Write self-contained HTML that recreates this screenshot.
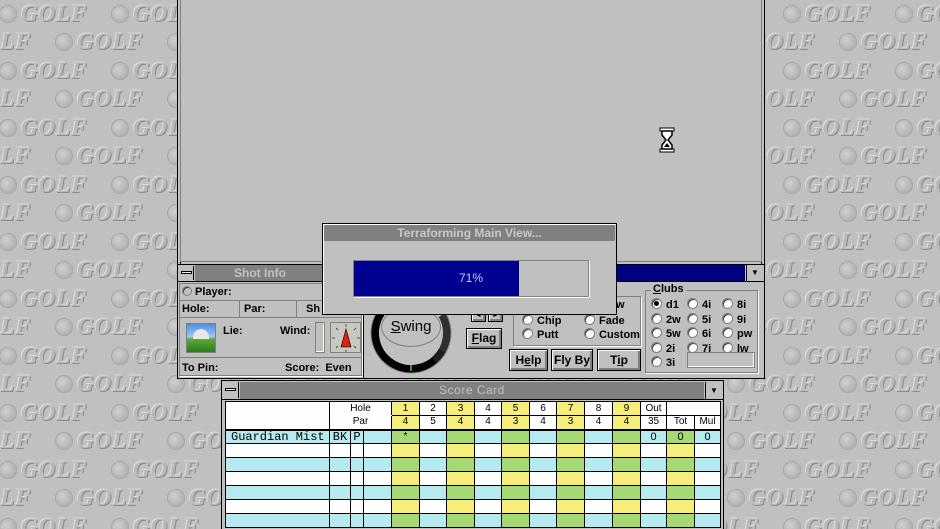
<!DOCTYPE html>
<html><head><style>
*{margin:0;padding:0;box-sizing:border-box}
html{width:940px;height:529px;overflow:hidden}
body{width:940px;height:529px;overflow:hidden;background:#c0c0c0;position:relative;font-family:"Liberation Sans",sans-serif;font-weight:bold;font-size:11px;color:#000}
.bg{position:absolute;left:0;top:0;width:940px;height:529px;overflow:hidden}
.row{position:absolute;white-space:nowrap;height:28px;line-height:28px}
.it{display:inline-block;width:112px;position:relative;height:28px}
.ball{position:absolute;left:6px;top:5px;width:18px;height:18px;border-radius:50%;background:radial-gradient(circle at 40% 40%,#d0d0d0,#b0b0b0 70%,#989898);box-shadow:inset 0 0 0 1px #a8a8a8}
.gt{position:absolute;left:28px;top:0;font-family:"Liberation Serif",serif;font-style:italic;font-weight:bold;font-size:23px;color:#bababa;text-shadow:-1px -1px 0 #dcdcdc,1px 1px 0 #8c8c8c;letter-spacing:1px}
.a{position:absolute}
.t{position:absolute;font-size:11px}
.btn{position:absolute;background:#c0c0c0;border:1px solid #000;box-shadow:inset 1px 1px 0 #fff,inset -2px -2px 0 #808080;text-align:center;font-size:12px;line-height:18px}
.rad{display:inline-block;width:11px;height:11px;border-radius:50%;background:#fff;border:1px solid #808080;box-shadow:inset 1px 1px 0 #404040;vertical-align:-1px;margin-right:4px;position:relative}
.rad.on::after{content:"";position:absolute;left:2px;top:2px;width:5px;height:5px;border-radius:50%;background:#000}
table{border-collapse:collapse;table-layout:fixed;position:absolute;left:225px;top:401px}
td{border:1px solid #000;height:14px;font-size:10px;font-weight:normal;text-align:center;padding:0;line-height:12px;overflow:hidden}
.y{background:#f6ee7a}.g{background:#a6d874}.c{background:#b4eaf0}.w{background:#fff}
</style></head><body>
<div class="bg">
<div class="row" style="top:0;left:-7px"><span class="it"><i class="ball"></i><b class="gt">GOLF</b></span><span class="it"><i class="ball"></i><b class="gt">GOLF</b></span><span class="it"><i class="ball"></i><b class="gt">GOLF</b></span><span class="it"><i class="ball"></i><b class="gt">GOLF</b></span><span class="it"><i class="ball"></i><b class="gt">GOLF</b></span><span class="it"><i class="ball"></i><b class="gt">GOLF</b></span><span class="it"><i class="ball"></i><b class="gt">GOLF</b></span><span class="it"><i class="ball"></i><b class="gt">GOLF</b></span><span class="it"><i class="ball"></i><b class="gt">GOLF</b></span></div>
<div class="row" style="top:28px;left:-63px"><span class="it"><i class="ball"></i><b class="gt">GOLF</b></span><span class="it"><i class="ball"></i><b class="gt">GOLF</b></span><span class="it"><i class="ball"></i><b class="gt">GOLF</b></span><span class="it"><i class="ball"></i><b class="gt">GOLF</b></span><span class="it"><i class="ball"></i><b class="gt">GOLF</b></span><span class="it"><i class="ball"></i><b class="gt">GOLF</b></span><span class="it"><i class="ball"></i><b class="gt">GOLF</b></span><span class="it"><i class="ball"></i><b class="gt">GOLF</b></span><span class="it"><i class="ball"></i><b class="gt">GOLF</b></span><span class="it"><i class="ball"></i><b class="gt">GOLF</b></span></div>
<div class="row" style="top:57px;left:-7px"><span class="it"><i class="ball"></i><b class="gt">GOLF</b></span><span class="it"><i class="ball"></i><b class="gt">GOLF</b></span><span class="it"><i class="ball"></i><b class="gt">GOLF</b></span><span class="it"><i class="ball"></i><b class="gt">GOLF</b></span><span class="it"><i class="ball"></i><b class="gt">GOLF</b></span><span class="it"><i class="ball"></i><b class="gt">GOLF</b></span><span class="it"><i class="ball"></i><b class="gt">GOLF</b></span><span class="it"><i class="ball"></i><b class="gt">GOLF</b></span><span class="it"><i class="ball"></i><b class="gt">GOLF</b></span></div>
<div class="row" style="top:85px;left:-63px"><span class="it"><i class="ball"></i><b class="gt">GOLF</b></span><span class="it"><i class="ball"></i><b class="gt">GOLF</b></span><span class="it"><i class="ball"></i><b class="gt">GOLF</b></span><span class="it"><i class="ball"></i><b class="gt">GOLF</b></span><span class="it"><i class="ball"></i><b class="gt">GOLF</b></span><span class="it"><i class="ball"></i><b class="gt">GOLF</b></span><span class="it"><i class="ball"></i><b class="gt">GOLF</b></span><span class="it"><i class="ball"></i><b class="gt">GOLF</b></span><span class="it"><i class="ball"></i><b class="gt">GOLF</b></span><span class="it"><i class="ball"></i><b class="gt">GOLF</b></span></div>
<div class="row" style="top:114px;left:-7px"><span class="it"><i class="ball"></i><b class="gt">GOLF</b></span><span class="it"><i class="ball"></i><b class="gt">GOLF</b></span><span class="it"><i class="ball"></i><b class="gt">GOLF</b></span><span class="it"><i class="ball"></i><b class="gt">GOLF</b></span><span class="it"><i class="ball"></i><b class="gt">GOLF</b></span><span class="it"><i class="ball"></i><b class="gt">GOLF</b></span><span class="it"><i class="ball"></i><b class="gt">GOLF</b></span><span class="it"><i class="ball"></i><b class="gt">GOLF</b></span><span class="it"><i class="ball"></i><b class="gt">GOLF</b></span></div>
<div class="row" style="top:142px;left:-63px"><span class="it"><i class="ball"></i><b class="gt">GOLF</b></span><span class="it"><i class="ball"></i><b class="gt">GOLF</b></span><span class="it"><i class="ball"></i><b class="gt">GOLF</b></span><span class="it"><i class="ball"></i><b class="gt">GOLF</b></span><span class="it"><i class="ball"></i><b class="gt">GOLF</b></span><span class="it"><i class="ball"></i><b class="gt">GOLF</b></span><span class="it"><i class="ball"></i><b class="gt">GOLF</b></span><span class="it"><i class="ball"></i><b class="gt">GOLF</b></span><span class="it"><i class="ball"></i><b class="gt">GOLF</b></span><span class="it"><i class="ball"></i><b class="gt">GOLF</b></span></div>
<div class="row" style="top:171px;left:-7px"><span class="it"><i class="ball"></i><b class="gt">GOLF</b></span><span class="it"><i class="ball"></i><b class="gt">GOLF</b></span><span class="it"><i class="ball"></i><b class="gt">GOLF</b></span><span class="it"><i class="ball"></i><b class="gt">GOLF</b></span><span class="it"><i class="ball"></i><b class="gt">GOLF</b></span><span class="it"><i class="ball"></i><b class="gt">GOLF</b></span><span class="it"><i class="ball"></i><b class="gt">GOLF</b></span><span class="it"><i class="ball"></i><b class="gt">GOLF</b></span><span class="it"><i class="ball"></i><b class="gt">GOLF</b></span></div>
<div class="row" style="top:199px;left:-63px"><span class="it"><i class="ball"></i><b class="gt">GOLF</b></span><span class="it"><i class="ball"></i><b class="gt">GOLF</b></span><span class="it"><i class="ball"></i><b class="gt">GOLF</b></span><span class="it"><i class="ball"></i><b class="gt">GOLF</b></span><span class="it"><i class="ball"></i><b class="gt">GOLF</b></span><span class="it"><i class="ball"></i><b class="gt">GOLF</b></span><span class="it"><i class="ball"></i><b class="gt">GOLF</b></span><span class="it"><i class="ball"></i><b class="gt">GOLF</b></span><span class="it"><i class="ball"></i><b class="gt">GOLF</b></span><span class="it"><i class="ball"></i><b class="gt">GOLF</b></span></div>
<div class="row" style="top:228px;left:-7px"><span class="it"><i class="ball"></i><b class="gt">GOLF</b></span><span class="it"><i class="ball"></i><b class="gt">GOLF</b></span><span class="it"><i class="ball"></i><b class="gt">GOLF</b></span><span class="it"><i class="ball"></i><b class="gt">GOLF</b></span><span class="it"><i class="ball"></i><b class="gt">GOLF</b></span><span class="it"><i class="ball"></i><b class="gt">GOLF</b></span><span class="it"><i class="ball"></i><b class="gt">GOLF</b></span><span class="it"><i class="ball"></i><b class="gt">GOLF</b></span><span class="it"><i class="ball"></i><b class="gt">GOLF</b></span></div>
<div class="row" style="top:256px;left:-63px"><span class="it"><i class="ball"></i><b class="gt">GOLF</b></span><span class="it"><i class="ball"></i><b class="gt">GOLF</b></span><span class="it"><i class="ball"></i><b class="gt">GOLF</b></span><span class="it"><i class="ball"></i><b class="gt">GOLF</b></span><span class="it"><i class="ball"></i><b class="gt">GOLF</b></span><span class="it"><i class="ball"></i><b class="gt">GOLF</b></span><span class="it"><i class="ball"></i><b class="gt">GOLF</b></span><span class="it"><i class="ball"></i><b class="gt">GOLF</b></span><span class="it"><i class="ball"></i><b class="gt">GOLF</b></span><span class="it"><i class="ball"></i><b class="gt">GOLF</b></span></div>
<div class="row" style="top:285px;left:-7px"><span class="it"><i class="ball"></i><b class="gt">GOLF</b></span><span class="it"><i class="ball"></i><b class="gt">GOLF</b></span><span class="it"><i class="ball"></i><b class="gt">GOLF</b></span><span class="it"><i class="ball"></i><b class="gt">GOLF</b></span><span class="it"><i class="ball"></i><b class="gt">GOLF</b></span><span class="it"><i class="ball"></i><b class="gt">GOLF</b></span><span class="it"><i class="ball"></i><b class="gt">GOLF</b></span><span class="it"><i class="ball"></i><b class="gt">GOLF</b></span><span class="it"><i class="ball"></i><b class="gt">GOLF</b></span></div>
<div class="row" style="top:313px;left:-63px"><span class="it"><i class="ball"></i><b class="gt">GOLF</b></span><span class="it"><i class="ball"></i><b class="gt">GOLF</b></span><span class="it"><i class="ball"></i><b class="gt">GOLF</b></span><span class="it"><i class="ball"></i><b class="gt">GOLF</b></span><span class="it"><i class="ball"></i><b class="gt">GOLF</b></span><span class="it"><i class="ball"></i><b class="gt">GOLF</b></span><span class="it"><i class="ball"></i><b class="gt">GOLF</b></span><span class="it"><i class="ball"></i><b class="gt">GOLF</b></span><span class="it"><i class="ball"></i><b class="gt">GOLF</b></span><span class="it"><i class="ball"></i><b class="gt">GOLF</b></span></div>
<div class="row" style="top:342px;left:-7px"><span class="it"><i class="ball"></i><b class="gt">GOLF</b></span><span class="it"><i class="ball"></i><b class="gt">GOLF</b></span><span class="it"><i class="ball"></i><b class="gt">GOLF</b></span><span class="it"><i class="ball"></i><b class="gt">GOLF</b></span><span class="it"><i class="ball"></i><b class="gt">GOLF</b></span><span class="it"><i class="ball"></i><b class="gt">GOLF</b></span><span class="it"><i class="ball"></i><b class="gt">GOLF</b></span><span class="it"><i class="ball"></i><b class="gt">GOLF</b></span><span class="it"><i class="ball"></i><b class="gt">GOLF</b></span></div>
<div class="row" style="top:370px;left:-63px"><span class="it"><i class="ball"></i><b class="gt">GOLF</b></span><span class="it"><i class="ball"></i><b class="gt">GOLF</b></span><span class="it"><i class="ball"></i><b class="gt">GOLF</b></span><span class="it"><i class="ball"></i><b class="gt">GOLF</b></span><span class="it"><i class="ball"></i><b class="gt">GOLF</b></span><span class="it"><i class="ball"></i><b class="gt">GOLF</b></span><span class="it"><i class="ball"></i><b class="gt">GOLF</b></span><span class="it"><i class="ball"></i><b class="gt">GOLF</b></span><span class="it"><i class="ball"></i><b class="gt">GOLF</b></span><span class="it"><i class="ball"></i><b class="gt">GOLF</b></span></div>
<div class="row" style="top:399px;left:-7px"><span class="it"><i class="ball"></i><b class="gt">GOLF</b></span><span class="it"><i class="ball"></i><b class="gt">GOLF</b></span><span class="it"><i class="ball"></i><b class="gt">GOLF</b></span><span class="it"><i class="ball"></i><b class="gt">GOLF</b></span><span class="it"><i class="ball"></i><b class="gt">GOLF</b></span><span class="it"><i class="ball"></i><b class="gt">GOLF</b></span><span class="it"><i class="ball"></i><b class="gt">GOLF</b></span><span class="it"><i class="ball"></i><b class="gt">GOLF</b></span><span class="it"><i class="ball"></i><b class="gt">GOLF</b></span></div>
<div class="row" style="top:427px;left:-63px"><span class="it"><i class="ball"></i><b class="gt">GOLF</b></span><span class="it"><i class="ball"></i><b class="gt">GOLF</b></span><span class="it"><i class="ball"></i><b class="gt">GOLF</b></span><span class="it"><i class="ball"></i><b class="gt">GOLF</b></span><span class="it"><i class="ball"></i><b class="gt">GOLF</b></span><span class="it"><i class="ball"></i><b class="gt">GOLF</b></span><span class="it"><i class="ball"></i><b class="gt">GOLF</b></span><span class="it"><i class="ball"></i><b class="gt">GOLF</b></span><span class="it"><i class="ball"></i><b class="gt">GOLF</b></span><span class="it"><i class="ball"></i><b class="gt">GOLF</b></span></div>
<div class="row" style="top:456px;left:-7px"><span class="it"><i class="ball"></i><b class="gt">GOLF</b></span><span class="it"><i class="ball"></i><b class="gt">GOLF</b></span><span class="it"><i class="ball"></i><b class="gt">GOLF</b></span><span class="it"><i class="ball"></i><b class="gt">GOLF</b></span><span class="it"><i class="ball"></i><b class="gt">GOLF</b></span><span class="it"><i class="ball"></i><b class="gt">GOLF</b></span><span class="it"><i class="ball"></i><b class="gt">GOLF</b></span><span class="it"><i class="ball"></i><b class="gt">GOLF</b></span><span class="it"><i class="ball"></i><b class="gt">GOLF</b></span></div>
<div class="row" style="top:484px;left:-63px"><span class="it"><i class="ball"></i><b class="gt">GOLF</b></span><span class="it"><i class="ball"></i><b class="gt">GOLF</b></span><span class="it"><i class="ball"></i><b class="gt">GOLF</b></span><span class="it"><i class="ball"></i><b class="gt">GOLF</b></span><span class="it"><i class="ball"></i><b class="gt">GOLF</b></span><span class="it"><i class="ball"></i><b class="gt">GOLF</b></span><span class="it"><i class="ball"></i><b class="gt">GOLF</b></span><span class="it"><i class="ball"></i><b class="gt">GOLF</b></span><span class="it"><i class="ball"></i><b class="gt">GOLF</b></span><span class="it"><i class="ball"></i><b class="gt">GOLF</b></span></div>
<div class="row" style="top:513px;left:-7px"><span class="it"><i class="ball"></i><b class="gt">GOLF</b></span><span class="it"><i class="ball"></i><b class="gt">GOLF</b></span><span class="it"><i class="ball"></i><b class="gt">GOLF</b></span><span class="it"><i class="ball"></i><b class="gt">GOLF</b></span><span class="it"><i class="ball"></i><b class="gt">GOLF</b></span><span class="it"><i class="ball"></i><b class="gt">GOLF</b></span><span class="it"><i class="ball"></i><b class="gt">GOLF</b></span><span class="it"><i class="ball"></i><b class="gt">GOLF</b></span><span class="it"><i class="ball"></i><b class="gt">GOLF</b></span></div>
</div>

<!-- main window -->
<div class="a" style="left:177px;top:-2px;width:588px;height:268px;background:#c0c0c0;border:1px solid #000;box-shadow:inset 2px 0 0 #c0c0c0,inset 3px 0 0 #000,inset -2px 0 0 #c0c0c0,inset -3px 0 0 #000"></div>
<div class="a" style="left:180px;top:-1px;width:582px;height:263px;border:1px solid #808080;border-top:none"></div>
<svg class="a" style="left:659px;top:127px" width="16" height="26" viewBox="0 0 16 26"><rect x="1" y="1" width="14" height="3" fill="#fff" stroke="#000"/><rect x="1" y="22" width="14" height="3" fill="#fff" stroke="#000"/><path d="M3 4 L3 8 L7 13 L3 18 L3 22 L13 22 L13 18 L9 13 L13 8 L13 4 Z" fill="#fff" stroke="#000" stroke-width="1.5"/><path d="M5 20 L8 16 L11 20Z" fill="#000"/></svg>

<!-- shot info titlebar -->
<div class="a" style="left:177px;top:264px;width:588px;height:18px;background:#c0c0c0;border:1px solid #000"></div>
<div class="a" style="left:179px;top:266px;width:15px;height:14px;background:#c0c0c0;border-right:1px solid #000"><div style="position:absolute;left:2px;top:5px;width:11px;height:3px;border:1px solid #000;background:#fff"></div></div>
<div class="a" style="left:195px;top:265px;width:550px;height:16px;background:#000080"></div>
<div class="a" style="left:195px;top:265px;width:130px;height:16px;background:#808080;color:#c0c0c0;text-align:center;line-height:16px;font-size:12px">Shot Info</div>
<div class="a" style="left:746px;top:265px;width:17px;height:16px;background:#c0c0c0;border-left:1px solid #000;text-align:center;font-size:8px;line-height:16px">▼</div>

<!-- shot info panel -->
<div class="a" style="left:177px;top:281px;width:588px;height:98px;background:#c0c0c0;border:1px solid #000"></div>
<div class="a" style="left:179px;top:283px;width:183px;height:93px;border:1px solid #808080;box-shadow:1px 1px 0 #fff"></div>
<div class="t" style="left:182px;top:286px"><span class="rad" style="width:10px;height:10px;background:#c0c0c0;margin-right:3px"></span>Player:</div>
<div class="a" style="left:180px;top:300px;width:182px;height:18px;border-top:1px solid #808080;border-bottom:1px solid #808080"></div>
<div class="a" style="left:239px;top:301px;width:1px;height:16px;background:#808080"></div>
<div class="a" style="left:296px;top:301px;width:1px;height:16px;background:#808080"></div>
<div class="t" style="left:182px;top:303px">Hole:</div>
<div class="t" style="left:244px;top:303px">Par:</div>
<div class="t" style="left:306px;top:303px">Sh</div>
<div class="a" style="left:186px;top:323px;width:30px;height:30px;background:linear-gradient(#4c8ee8 0%,#9cc8f0 45%,#5aa83a 55%,#2c7a1c 100%);border:1px solid #808080"></div>
<div class="a" style="left:193px;top:329px;width:16px;height:10px;border-radius:8px 8px 0 0;background:#e8e8e8"></div>
<div class="t" style="left:223px;top:325px">Lie:</div>
<div class="t" style="left:280px;top:325px">Wind:</div>
<div class="a" style="left:315px;top:322px;width:10px;height:31px;border:1px solid #808080;box-shadow:inset -1px -1px 0 #fff"></div>
<div class="a" style="left:330px;top:322px;width:31px;height:31px;border:1px solid #808080;background:#c8c8c0"></div>
<svg class="a" style="left:331px;top:323px" width="30" height="30"><path d="M15 6 L10 24 L20 24 Z" fill="#e02010" stroke="#000" stroke-width=".6"/><g stroke="#555" stroke-width="1"><path d="M15 1v3M15 27v2M1 15h3M26 15h3M5 5l2 2M23 23l2 2M25 5l-2 2M5 25l2-2"/></g></svg>
<div class="a" style="left:180px;top:357px;width:182px;height:1px;background:#808080"></div>
<div class="t" style="left:182px;top:362px">To Pin:</div>
<div class="t" style="left:285px;top:362px">Score:&nbsp; Even</div>
<div class="a" style="left:363px;top:281px;width:1px;height:97px;background:#000"></div>
<svg class="a" style="left:368px;top:290px" width="88" height="88"><circle cx="43" cy="43" r="36" fill="none" stroke="#000" stroke-width="8" stroke-dasharray="160 400" transform="rotate(30 43 43)"/><circle cx="43" cy="43" r="36" fill="none" stroke="#202020" stroke-width="8" stroke-dasharray="50 400" transform="rotate(-30 43 43)" opacity=".9"/><circle cx="43" cy="43" r="40" fill="none" stroke="#808080" stroke-width="1"/><line x1="43" y1="75" x2="43" y2="81" stroke="#3a9a3a" stroke-width="2"/></svg>
<div class="a" style="left:381px;top:307px;width:60px;height:40px;border-radius:30px/20px;background:#c0c0c0;border:1px solid #808080;text-align:center;line-height:38px;font-size:15px;font-weight:normal"><u>S</u>wing</div>
<div class="btn" style="left:471px;top:310px;width:15px;height:12px;font-size:7px;line-height:10px">◄</div>
<div class="btn" style="left:488px;top:310px;width:15px;height:12px;font-size:7px;line-height:10px">►</div>
<div class="btn" style="left:466px;top:328px;width:36px;height:21px;line-height:19px"><u>F</u>lag</div>
<div class="a" style="left:513px;top:296px;width:128px;height:50px;border:1px solid #808080;box-shadow:1px 1px 0 #fff"></div>
<div class="t" style="left:616px;top:299px">w</div>
<div class="t" style="left:522px;top:314px;font-size:11px"><span class="rad"></span>Chip</div>
<div class="t" style="left:584px;top:314px;font-size:11px"><span class="rad"></span>Fade</div>
<div class="t" style="left:522px;top:328px;font-size:11px"><span class="rad"></span>Putt</div>
<div class="t" style="left:584px;top:328px;font-size:11px"><span class="rad"></span>Custom</div>
<div class="btn" style="left:509px;top:349px;width:39px;height:22px;line-height:20px">H<u>e</u>lp</div>
<div class="btn" style="left:551px;top:349px;width:42px;height:22px;line-height:20px">Fly By</div>
<div class="btn" style="left:597px;top:349px;width:44px;height:22px;line-height:20px">T<u>i</u>p</div>
<div class="a" style="left:645px;top:290px;width:113px;height:83px;border:1px solid #808080;box-shadow:1px 1px 0 #fff"></div>
<div class="t" style="left:651px;top:283px;background:#c0c0c0;padding:0 2px;font-size:11px"><u>C</u>lubs</div>
<div class="t" style="left:651px;top:298px;font-size:11px;line-height:13.5px"><span class="rad on"></span>d1<br><span class="rad"></span>2w<br><span class="rad"></span>5w<br><span class="rad"></span>2i<br><span class="rad"></span>3i</div>
<div class="t" style="left:687px;top:298px;font-size:11px;line-height:13.5px"><span class="rad"></span>4i<br><span class="rad"></span>5i<br><span class="rad"></span>6i<br><span class="rad"></span>7i</div>
<div class="t" style="left:722px;top:298px;font-size:11px;line-height:13.5px"><span class="rad"></span>8i<br><span class="rad"></span>9i<br><span class="rad"></span>pw<br><span class="rad"></span>lw</div>
<div class="a" style="left:687px;top:352px;width:68px;height:16px;border:1px solid #808080;box-shadow:inset -1px -1px 0 #fff"></div>

<!-- progress dialog -->
<div class="a" style="left:322px;top:223px;width:295px;height:92px;background:#c0c0c0;border:1px solid #000;box-shadow:inset 1px 1px 0 #fff"></div>
<div class="a" style="left:324px;top:225px;width:291px;height:16px;background:#808080;color:#c8c8c8;text-align:center;line-height:16px;font-size:12px">Terraforming Main View...</div>
<div class="a" style="left:353px;top:260px;width:236px;height:37px;border:1px solid #808080;box-shadow:1px 1px 0 #fff;background:#c0c0c0"></div>
<div class="a" style="left:354px;top:261px;width:165px;height:35px;background:#000090"></div>
<div class="a" style="left:354px;top:261px;width:234px;height:35px;text-align:center;line-height:35px;color:#c8c8ff;font-weight:normal;font-size:12px">71%</div>

<!-- score card -->
<div class="a" style="left:221px;top:380px;width:503px;height:160px;background:#c0c0c0;border:1px solid #000"></div>
<div class="a" style="left:223px;top:382px;width:16px;height:16px;border-right:1px solid #000"><div style="position:absolute;left:2px;top:6px;width:11px;height:3px;border:1px solid #000;background:#fff"></div></div>
<div class="a" style="left:240px;top:382px;width:464px;height:17px;background:#808080;color:#c0c0c0;text-align:center;line-height:17px;font-size:12px;font-weight:normal;letter-spacing:.5px">Score Card</div>
<div class="a" style="left:705px;top:382px;width:17px;height:17px;border-left:1px solid #000;text-align:center;font-size:8px;line-height:17px">▼</div>
<div class="a" style="left:222px;top:399px;width:501px;height:1px;background:#000"></div>
<table>
<colgroup><col style="width:104px"><col style="width:21px"><col style="width:13px"><col style="width:28px"><col style="width:28px"><col style="width:27px"><col style="width:28px"><col style="width:27px"><col style="width:28px"><col style="width:27px"><col style="width:28px"><col style="width:28px"><col style="width:28px"><col style="width:26px"><col style="width:28px"><col style="width:26px"></colgroup>
<tr class="w"><td rowspan="2"></td><td colspan="3" style="border-bottom-color:#fff">Hole</td><td class="y">1</td><td>2</td><td class="y">3</td><td>4</td><td class="y">5</td><td>6</td><td class="y">7</td><td>8</td><td class="y">9</td><td>Out</td><td colspan="2"></td></tr>
<tr class="w"><td colspan="3">Par</td><td class="y">4</td><td>5</td><td class="y">4</td><td>4</td><td class="y">3</td><td>4</td><td class="y">3</td><td>4</td><td class="y">4</td><td>35</td><td>Tot</td><td>Mul</td></tr>
<tr class="c" style="border-top:2px solid #000"><td style="font-family:'Liberation Mono',monospace;font-size:12px;text-align:left;padding-left:5px;white-space:nowrap">Guardian Mist</td><td style="font-family:'Liberation Mono',monospace;font-size:12px">BK</td><td style="font-family:'Liberation Mono',monospace;font-size:12px">P</td><td></td><td class="g">*</td><td></td><td class="g"></td><td></td><td class="g"></td><td></td><td class="g"></td><td></td><td class="g"></td><td style="font-size:11px">0</td><td class="g" style="font-size:11px">0</td><td style="font-size:11px">0</td></tr>
<tr class="w"><td></td><td></td><td></td><td></td><td class="y"></td><td></td><td class="y"></td><td></td><td class="y"></td><td></td><td class="y"></td><td></td><td class="y"></td><td></td><td class="y"></td><td></td></tr>
<tr class="c"><td></td><td></td><td></td><td></td><td class="g"></td><td></td><td class="g"></td><td></td><td class="g"></td><td></td><td class="g"></td><td></td><td class="g"></td><td></td><td class="g"></td><td></td></tr>
<tr class="w"><td></td><td></td><td></td><td></td><td class="y"></td><td></td><td class="y"></td><td></td><td class="y"></td><td></td><td class="y"></td><td></td><td class="y"></td><td></td><td class="y"></td><td></td></tr>
<tr class="c"><td></td><td></td><td></td><td></td><td class="g"></td><td></td><td class="g"></td><td></td><td class="g"></td><td></td><td class="g"></td><td></td><td class="g"></td><td></td><td class="g"></td><td></td></tr>
<tr class="w"><td></td><td></td><td></td><td></td><td class="y"></td><td></td><td class="y"></td><td></td><td class="y"></td><td></td><td class="y"></td><td></td><td class="y"></td><td></td><td class="y"></td><td></td></tr>
<tr class="c"><td></td><td></td><td></td><td></td><td class="g"></td><td></td><td class="g"></td><td></td><td class="g"></td><td></td><td class="g"></td><td></td><td class="g"></td><td></td><td class="g"></td><td></td></tr>
</table>
</body></html>
